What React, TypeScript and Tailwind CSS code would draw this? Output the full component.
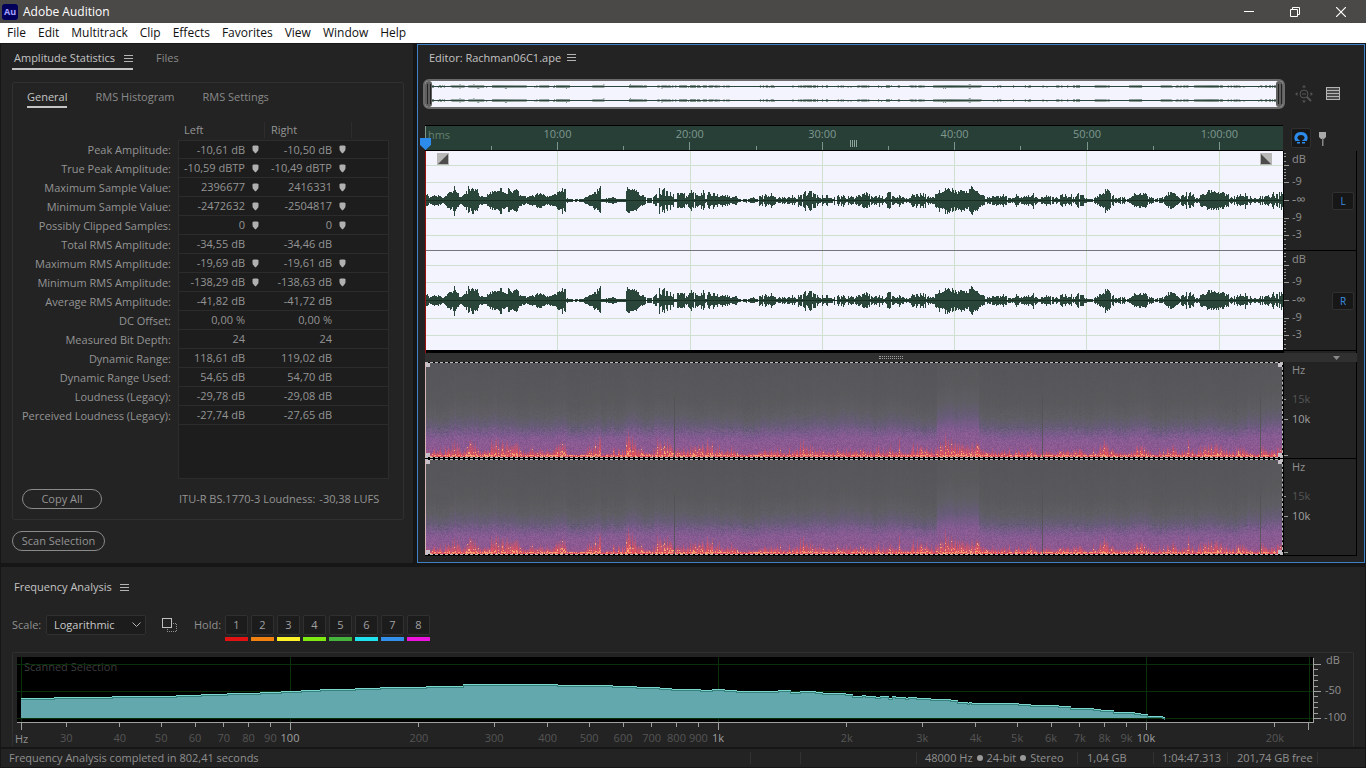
import type { ReactNode } from "react";

type Point = [number, number];

const WAVE_WIDTH = 857;
const DURATION_MIN = 64.8;

const menus = ["File", "Edit", "Multitrack", "Clip", "Effects", "Favorites", "View", "Window", "Help"];

const stats = [
  { label: "Peak Amplitude:", left: "-10,61 dB", right: "-10,50 dB", pin: true },
  { label: "True Peak Amplitude:", left: "-10,59 dBTP", right: "-10,49 dBTP", pin: true },
  { label: "Maximum Sample Value:", left: "2396677", right: "2416331", pin: true },
  { label: "Minimum Sample Value:", left: "-2472632", right: "-2504817", pin: true },
  { label: "Possibly Clipped Samples:", left: "0", right: "0", pin: true },
  { label: "Total RMS Amplitude:", left: "-34,55 dB", right: "-34,46 dB" },
  { label: "Maximum RMS Amplitude:", left: "-19,69 dB", right: "-19,61 dB", pin: true },
  { label: "Minimum RMS Amplitude:", left: "-138,29 dB", right: "-138,63 dB", pin: true },
  { label: "Average RMS Amplitude:", left: "-41,82 dB", right: "-41,72 dB" },
  { label: "DC Offset:", left: "0,00 %", right: "0,00 %" },
  { label: "Measured Bit Depth:", left: "24", right: "24" },
  { label: "Dynamic Range:", left: "118,61 dB", right: "119,02 dB" },
  { label: "Dynamic Range Used:", left: "54,65 dB", right: "54,70 dB" },
  { label: "Loudness (Legacy):", left: "-29,78 dB", right: "-29,08 dB" },
  { label: "Perceived Loudness (Legacy):", left: "-27,74 dB", right: "-27,65 dB" },
];

const holds = [
  { n: 1, color: "bg-[#e01212]" },
  { n: 2, color: "bg-[#f08010]" },
  { n: 3, color: "bg-[#fff12a]" },
  { n: 4, color: "bg-[#7fea12]" },
  { n: 5, color: "bg-[#45b33c]" },
  { n: 6, color: "bg-[#1fe2ee]" },
  { n: 7, color: "bg-[#3390ea]" },
  { n: 8, color: "bg-[#ee12de]" },
];

// peak envelope of the recording: [position, half height]
const envelope: Point[] = [
  [0, 8], [3, 3], [8, 6], [12, 6], [17, 2], [20, 5], [24, 9], [27, 10], [28, 14], [31, 11], [33, 4], [38, 6], [42, 13],
  [46, 14], [48, 9], [51, 13], [53, 4], [58, 5], [60, 4], [64, 9], [68, 12], [75, 13], [79, 9], [82, 11], [86, 9],
  [90, 12], [93, 7], [98, 4], [101, 3], [104, 7], [108, 4], [114, 10], [118, 6], [122, 4], [128, 7], [133, 10],
  [139, 14], [141, 3], [145, 1], [152, 1], [157, 2], [162, 5], [168, 9], [173, 13], [174, 13], [175, 1], [182, 2],
  [187, 3], [193, 1], [199, 1], [200, 14], [205, 12], [210, 9], [214, 6], [220, 3], [228, 3], [229, 8], [232, 13],
  [240, 10], [250, 8], [256, 9], [260, 5], [265, 9], [275, 9], [283, 12], [285, 7], [295, 6], [304, 5], [311, 4],
  [317, 1], [326, 3], [330, 1], [334, 5], [341, 7], [347, 5], [354, 4], [364, 3], [371, 6], [379, 9], [384, 9],
  [390, 5], [397, 5], [404, 4], [409, 3], [414, 6], [420, 4], [428, 4], [434, 6], [441, 7], [446, 4], [450, 4],
  [452, 4], [453, 12], [454, 4], [456, 4], [457, 11], [458, 4], [464, 9], [467, 4], [472, 4], [473, 11], [475, 3],
  [484, 2], [486, 8], [490, 6], [494, 8], [499, 7], [504, 4], [508, 3], [509, 10], [517, 11], [523, 12], [530, 10],
  [534, 10], [541, 11], [546, 14], [548, 10], [552, 10], [555, 7], [562, 3], [567, 4], [572, 4], [577, 6], [582, 3],
  [587, 2], [591, 7], [594, 3], [600, 4], [605, 4], [606, 9], [608, 4], [613, 1], [617, 5], [622, 5], [628, 2],
  [632, 5], [637, 5], [641, 5], [649, 7], [657, 5], [661, 1], [667, 3], [671, 4], [676, 7], [678, 12], [680, 9],
  [683, 9], [686, 7], [689, 3], [697, 3], [703, 2], [706, 6], [714, 9], [722, 6], [726, 2], [730, 1], [734, 4],
  [739, 4], [744, 10], [747, 9], [752, 3], [759, 6], [762, 9], [767, 6], [770, 2], [776, 6], [781, 9], [786, 9],
  [790, 10], [795, 11], [798, 7], [804, 4], [809, 4], [814, 9], [817, 8], [823, 4], [827, 2], [833, 2], [835, 8],
  [840, 6], [844, 3], [847, 10], [849, 3], [852, 10], [858, 8],
];

// stretches where the signal is dense and fills its envelope
const denseRanges: Point[] = [[0, 140], [155, 220], [508, 553], [706, 722], [740, 750], [776, 798]];

// averaged spectrum of the scan: [x, y] inside a 1296 x 65 plot
const spectrum: Point[] = [
  [4, 41], [37, 40], [95, 39], [131, 39], [159, 38], [184, 37], [210, 36], [243, 35], [264, 34], [284, 33], [303, 32],
  [338, 31], [363, 30], [409, 29], [446, 27], [540, 28], [595, 29], [619, 30], [642, 31], [654, 32], [683, 33],
  [695, 32], [707, 33], [719, 34], [761, 33], [773, 35], [783, 34], [798, 35], [805, 36], [828, 37], [835, 39],
  [845, 38], [848, 39], [858, 40], [863, 39], [871, 41], [875, 39], [878, 40], [888, 41], [891, 40], [899, 41],
  [913, 42], [933, 43], [940, 45], [950, 46], [952, 45], [954, 46], [992, 46], [1001, 47], [1013, 48], [1041, 49],
  [1053, 51], [1076, 52], [1083, 53], [1096, 55], [1117, 56], [1123, 57], [1130, 59], [1145, 60], [1147, 61],
];

const timeMarks = [10, 20, 30, 40, 50, 60];
const freqMarks = [
  30, 40, 50, 60, 70, 80, 90, 100, 200, 300, 400, 500, 600, 700, 800, 900, 1000, 2000, 3000, 4000, 5000, 6000, 7000,
  8000, 9000, 10000, 20000,
];

const timePercent = (minutes: number) => `${(minutes / DURATION_MIN) * 100}%`;
const freqPercent = (hz: number) => `${((428 * Math.log10(hz / 100) + 273) / 1296) * 100}%`;
const freqLabel = (hz: number) => (hz >= 1000 ? `${hz / 1000}k` : `${hz}`);
const isDecade = (hz: number) => Number.isInteger(Math.log10(hz));

const createRandom = (seed: number) => () => {
  seed = (seed * 1664525 + 1013904223) % 4294967296;
  return seed / 4294967296;
};

const amplitudeAt = (x: number) => {
  const next = envelope.findIndex(([px]) => px > x);
  if (next < 1) return envelope[next === 0 ? 0 : envelope.length - 1][1];
  const [x0, a0] = envelope[next - 1];
  const [x1, a1] = envelope[next];
  return a0 + ((a1 - a0) * (x - x0)) / (x1 - x0);
};

const wavePath = (center: number, scale: number) => {
  const random = createRandom(31);
  let path = "";
  let level = 1;
  for (let x = 0; x < WAVE_WIDTH; x++) {
    const amp = amplitudeAt(x);
    const dense = denseRanges.some(([from, to]) => x >= from && x < to);
    if (random() < 0.85) level = dense ? 0.62 + random() * 0.48 : random() < 0.12 ? 0.15 : 0.4 + random() * 0.8;
    const top = Math.round(amp * scale * level * (0.85 + random() * 0.2));
    const bottom = Math.round(amp * scale * level * (0.85 + random() * 0.2));
    path += `M${x + 0.5} ${center - top}V${center + bottom + 1}`;
  }
  return path;
};

const spectrumPath = spectrum.map(([x, y], i) => (i === 0 ? `M${x} ${y + 0.5}` : `H${x}V${y + 0.5}`)).join("");

const mix = (a: number[], b: number[], t: number) => a.map((v, i) => v + (b[i] - v) * Math.max(0, Math.min(1, t)));

const heat: { d: number; rgb: number[] }[] = [
  { d: 0, rgb: [164, 84, 136] },
  { d: 6, rgb: [142, 88, 144] },
  { d: 18, rgb: [136, 91, 147] },
  { d: 25, rgb: [120, 91, 138] },
  { d: 33, rgb: [102, 92, 118] },
  { d: 44, rgb: [94, 93, 99] },
  { d: 60, rgb: [89, 89, 92] },
  { d: 96, rgb: [86, 86, 90] },
];

const heatAt = (d: number) => {
  const next = heat.findIndex((h) => h.d > d);
  if (next < 1) return heat[next === 0 ? 0 : heat.length - 1].rgb;
  return mix(heat[next - 1].rgb, heat[next].rgb, (d - heat[next - 1].d) / (heat[next].d - heat[next - 1].d));
};

const drawSpectrogram = (canvas: HTMLCanvasElement | null) => {
  const ctx = canvas?.getContext("2d");
  if (!canvas || !ctx) return;
  const { width, height } = canvas;
  const image = ctx.createImageData(width, height);
  const random = createRandom(5);
  let drift = 0;
  for (let x = 0; x < width; x++) {
    const amp = amplitudeAt(x) / 14;
    drift = drift * 0.9 + (random() - 0.5) * 0.06;
    const bump = x > 510 && x < 553 ? 0.26 : 0.12 * Math.exp(-(((x - 410) / 70) ** 2)) + (x > 820 ? 0.15 : 0);
    const spread = 0.86 + bump + amp * 0.12 + drift + (random() - 0.5) * 0.08;
    const strength = random();
    const flame = 1 + amp ** 1.2 * 21 * (0.3 + strength * 0.7) + (random() > 0.93 ? 6 : 0);
    const gap = x === 248 || x === 616 || x === 834;
    for (let y = 0; y < height; y++) {
      const d = height - 1 - y;
      let rgb = heatAt(d / spread);
      if (d < flame) {
        const t = 1 - d / flame;
        rgb = mix(rgb, [238, 82, 84], 0.15 + (0.4 + strength * 0.55) * t);
        if (random() < (0.08 + amp * 0.35) * t * t) rgb = mix(rgb, [255, 190, 120], 0.75);
      }
      if (d === 1 && random() < 0.5) rgb = [250, 150, 110];
      if (gap) rgb = mix(rgb, [82, 82, 84], d < 60 ? 0.8 : 0.1);
      const noise = (random() - 0.5) * (d < 30 ? 22 : d < 46 ? 8 : 3);
      const i = (y * width + x) * 4;
      image.data[i] = rgb[0] + noise;
      image.data[i + 1] = rgb[1] + noise * 0.6;
      image.data[i + 2] = rgb[2] + noise * 0.6;
      image.data[i + 3] = 255;
    }
  }
  ctx.putImageData(image, 0, 0);
};

const PanelMenu = () => (
  <button aria-label="Panel menu" className="flex w-[9px] flex-col gap-[2px]">
    <span className="h-px bg-[#b4b4b4]" />
    <span className="h-px bg-[#b4b4b4]" />
    <span className="h-px bg-[#b4b4b4]" />
  </button>
);

const TitleBar = () => (
  <header className="flex h-[23px] items-center bg-[#4b4947] text-xs text-white">
    <span className="ml-[2px] flex size-4 items-center justify-center rounded-[3px] bg-[#00005b] text-[9px] font-bold text-[#a3a3ff]">
      Au
    </span>
    <h1 className="ml-[5px] flex-1">Adobe Audition</h1>
    <button aria-label="Minimize" className="flex h-full w-[46px] items-center justify-center">
      <svg width="10" height="10"><path d="M0 4.5H10" stroke="white" /></svg>
    </button>
    <button aria-label="Restore" className="flex h-full w-[46px] items-center justify-center">
      <svg width="10" height="10" fill="none" stroke="white"><path d="M.5 2.5h7v7h-7zM2.5 2.5v-2h7v7h-2" /></svg>
    </button>
    <button aria-label="Close" className="flex h-full w-[46px] items-center justify-center">
      <svg width="10" height="10" stroke="white" strokeWidth="1.2"><path d="M0 0L10 10M10 0L0 10" /></svg>
    </button>
    <span className="w-[2px]" />
  </header>
);

const MenuBar = () => (
  <nav className="flex h-5 items-center gap-3 bg-white pl-[7px] text-xs text-[#111]">
    {menus.map((menu) => (
      <button key={menu}>{menu}</button>
    ))}
  </nav>
);

const Pin = () => (
  <svg width="7" height="9" className="inline-block" fill="#b0b0b0">
    <path d="M1.500 .5H5.500L6.500 1.500V4C6.500 5.500 5 7 3.500 8.500C2 7 .5 5.500 .5 4V1.500Z" />
  </svg>
);

const StatCell = ({ value, pin }: { value: string; pin?: boolean }) => (
  <div className="flex items-center gap-[7px] pl-1">
    <span className="w-[62px] whitespace-nowrap text-right">{value}</span>
    {pin && <Pin />}
  </div>
);

const StatisticsPanel = () => (
  <section className="w-[412px] shrink-0 bg-[#232323] pr-[9px] pl-[11px]">
    <div className="flex h-[26px] items-end">
      <div className="flex h-[22px] items-center gap-[9px] border-b-2 border-[#c4c4c4] pl-[2px] text-[#c4c4c4]">
        <button>Amplitude Statistics</button>
        <PanelMenu />
      </div>
      <button className="mb-px ml-[23px] flex h-[22px] items-center text-[#8a8a8a]">Files</button>
    </div>
    <div className="mt-3 h-[438px] rounded-[2px] border border-[#303030] px-[9px]">
      <div className="flex h-[25px] items-end gap-[28px] pl-[5px] text-[#8a8a8a]">
        <button className="h-5 border-b-2 border-[#c4c4c4] text-[#c4c4c4]">General</button>
        <button className="h-5 pb-[2px]">RMS Histogram</button>
        <button className="h-5 pb-[2px]">RMS Settings</button>
      </div>
      <table className="mt-3 w-[367px] table-fixed border-separate border-spacing-0 text-[#949494]">
        <colgroup>
          <col className="w-[156px]" />
          <col className="w-[87px]" />
          <col className="w-[87px]" />
          <col />
        </colgroup>
        <thead>
          <tr className="h-5">
            <td />
            <th className="py-0 pr-0 pl-[6px] text-left font-normal">
              <div className="border-r border-[#2d2d2d] leading-4">Left</div>
            </th>
            <th className="py-0 pr-0 pl-[6px] text-left font-normal">
              <div className="border-r border-[#2d2d2d] leading-4">Right</div>
            </th>
            <td />
          </tr>
        </thead>
        <tbody>
          {stats.map((row, i) => (
            <tr key={row.label} className="h-[19px]">
              <th className="whitespace-nowrap p-0 pr-[7px] text-right font-normal">
                <div className="flex justify-end leading-[18px]">{row.label}</div>
              </th>
              <td className={`border-b border-l border-[#2c2c2c] bg-[#1d1d1d] p-0 ${i === 0 ? "border-t" : ""}`}>
                <StatCell value={row.left} pin={row.pin} />
              </td>
              <td className={`border-b border-[#2c2c2c] bg-[#1d1d1d] p-0 pl-px ${i === 0 ? "border-t" : ""}`}>
                <StatCell value={row.right} pin={row.pin} />
              </td>
              <td className={`border-b border-r border-[#2c2c2c] bg-[#1d1d1d] p-0 ${i === 0 ? "border-t" : ""}`} />
            </tr>
          ))}
          <tr className="h-[54px]">
            <td />
            <td colSpan={3} className="border border-t-0 border-[#2c2c2c] bg-[#1d1d1d]" />
          </tr>
        </tbody>
      </table>
      <div className="mt-[10px] flex items-center text-[#949494]">
        <button className="h-5 w-20 rounded-full border border-[#8a8a8a] leading-4">Copy All</button>
        <p className="ml-[77px] flex gap-1">
          <span>ITU-R BS.1770-3 Loudness:</span>
          <span>-30,38 LUFS</span>
        </p>
      </div>
    </div>
    <button className="mt-[11px] h-5 w-[93px] rounded-full border border-[#8a8a8a] leading-4 text-[#949494]">Scan Selection</button>
  </section>
);

const OverviewHandle = () => (
  <span className="flex w-[7px] justify-center gap-[2px] rounded-[3px] bg-[#5f5f5f] py-[3px]">
    <i className="w-px bg-[#222]" />
    <i className="w-px bg-[#222]" />
  </span>
);

const Overview = () => (
  <div className="flex items-center pl-[5px]">
    <div className="flex h-[30px] flex-1 justify-between overflow-hidden rounded-md border-2 border-[#6b6b6b] bg-[#f4f4ff]">
      <OverviewHandle />
      <svg className="h-full min-w-0 flex-1" viewBox="0 0 857 26" preserveAspectRatio="none" shapeRendering="crispEdges">
        <path d={wavePath(5, 0.12)} stroke="#7f8f89" />
        <path d={wavePath(19, 0.12)} stroke="#7f8f89" />
        <path d="M0 5.5H857M0 19.5H857" stroke="#2b463c" />
      </svg>
      <OverviewHandle />
    </div>
    <div className="flex w-[79px] items-center gap-[13px] pl-[10px]">
      <button aria-label="Zoom out full">
        <svg width="18" height="18" fill="none" stroke="#555">
          <circle cx="9" cy="9" r="4" />
          <path d="M7 9h4" />
          <path d="M12 12l4 4" strokeWidth="2" />
          <path d="M9 0l2 2.500h-4zM9 18l2-2.500h-4zM0 9l2.500-2v4zM18 9l-2.500-2v4z" fill="#555" stroke="none" />
        </svg>
      </button>
      <button aria-label="Show track list">
        <svg width="14" height="14" fill="none" stroke="#b4b4b4" shapeRendering="crispEdges">
          <rect x=".5" y=".5" width="13" height="12" fill="#4a4a4a" />
          <path d="M0 3.500H14M0 6.500H14M0 9.500H14" />
        </svg>
      </button>
    </div>
  </div>
);

const TimeRuler = () => (
  <div className="flex h-[26px]">
    <div className="relative flex-1 border-y border-black bg-[#283f37]">
      <svg className="block h-6 w-full" shapeRendering="crispEdges">
        {timeMarks.map((m) => (
          <line key={m} x1={timePercent(m)} x2={timePercent(m)} y1="16" y2="24" stroke="#7d968c" />
        ))}
        {timeMarks.map((m) => (
          <line key={m} x1={timePercent(m - 5)} x2={timePercent(m - 5)} y1="20" y2="24" stroke="#7d968c" />
        ))}
        <path d="M.5 0V24" stroke="#7d968c" />
        <svg x="50%" overflow="visible">
          <path d="M-3.500 14V21M-1.500 14V21M.500 14V21M2.500 14V21" stroke="#8fa59c" />
        </svg>
        <g fill="#7f998f" textAnchor="middle" shapeRendering="auto">
          <text x="14" y="13" fill="#64806f">hms</text>
          {timeMarks.map((m) => (
            <text key={m} x={timePercent(m)} y="12">
              {m === 60 ? "1:00:00" : `${m}:00`}
            </text>
          ))}
        </g>
      </svg>
      <svg width="11" height="12" className="absolute top-3 -left-[5px] z-10" fill="#2d8ceb">
        <path d="M0 0H11V7L5.500 12L0 7Z" />
      </svg>
    </div>
    <div className="flex w-[74px] items-center gap-[7px] pl-2">
      <button aria-label="Snapping" className="flex size-5 items-center justify-center rounded-[2px] border border-[#303030] bg-[#171717]">
        <svg width="14" height="14" fill="none" stroke="#2d8ceb">
          <path d="M4.500 12.500V10.500C0 8 1.800 2.500 7 2.500S14 8 9.500 10.500V12.500" strokeWidth="3" />
          <path d="M2 10.500H6.500M7.500 10.500H12" stroke="#171717" />
        </svg>
      </button>
      <button aria-label="Add marker">
        <svg width="9" height="15" fill="#a8a8a8">
          <path d="M1 1H8V6L6 8H3L1 6Z" />
          <path d="M4 7h1.500v8H4z" fill="#888" />
        </svg>
      </button>
    </div>
  </div>
);

const DecibelScale = ({ channel }: { channel: string }) => (
  <div className="flex h-[100px] items-center justify-between border-b border-black pr-[2px]">
    <svg className="h-[99px] w-12">
      <path
        d="M0 14.500H5M0 31.500H5M0 49.500H5M0 67.500H5M0 84.500H5M0 2.500H2M0 5.500H2M0 10.500H2M0 18.500H2M0 21.500H2M0 24.500H2M0 27.500H2M0 70.500H2M0 73.500H2M0 77.500H2M0 80.500H2M0 88.500H2M0 93.500H2M0 97.500H2"
        stroke="#9a9a9a"
        shapeRendering="crispEdges"
      />
      <g fill="#8f8f8f">
        <text x="8" y="12">dB</text>
        <text x="8" y="34">-9</text>
        <text x="8" y="53" className="text-[13px]">-∞</text>
        <text x="8" y="70">-9</text>
        <text x="8" y="87">-3</text>
      </g>
    </svg>
    <button className="flex h-[18px] w-[22px] items-center justify-center rounded-[2px] border border-[#303030] bg-[#171717] text-[10px] text-[#3a8ee6]">
      {channel}
    </button>
  </div>
);

const FadeIcon = ({ flip }: { flip?: boolean }) => (
  <svg width="12" height="12">
    <rect width="12" height="12" fill="#b8b8b8" />
    <path d={flip ? "M1 1V11H11Z" : "M11 1V11H1Z"} fill="#4c4c4c" />
  </svg>
);

const WaveformView = () => (
  <div className="flex h-[202px]">
    <div className="relative flex-1 border-l border-[#9c1010] bg-black pb-[3px]">
      <svg
        className="block h-full w-full bg-[#f4f4ff]"
        viewBox="0 0 857 199"
        preserveAspectRatio="none"
        shapeRendering="crispEdges"
      >
        <path
          d="M0 14.500H857M0 31.500H857M0 67.500H857M0 84.500H857M0 114.500H857M0 131.500H857M0 167.500H857M0 184.500H857"
          stroke="#d0e0d0"
        />
        {timeMarks.map((m) => {
          const x = Math.round((m / DURATION_MIN) * WAVE_WIDTH) - 0.5;
          return <path key={m} d={`M${x} 0V199`} stroke="#d0e0d0" />;
        })}
        <path d="M0 99.500H857" stroke="#75757e" />
        <path d={wavePath(49, 1)} stroke="#2a463b" />
        <path d={wavePath(149, 1)} stroke="#2a463b" />
        <path d="M0 49.500H857M0 149.500H857" stroke="#182c22" />
      </svg>
      <div className="absolute inset-x-[11px] top-[2px] flex justify-between">
        <FadeIcon />
        <FadeIcon flip />
      </div>
    </div>
    <div className="flex w-[74px] flex-col border-x border-black">
      <DecibelScale channel="L" />
      <DecibelScale channel="R" />
    </div>
  </div>
);

const Splitter = () => (
  <div className="flex h-[9px] items-center bg-[#303030]">
    <div className="flex flex-1 flex-col items-center gap-px pl-6">
      <span className="h-px w-6 border-t border-dotted border-[#a0a0a0]" />
      <span className="h-px w-6 border-t border-dotted border-[#a0a0a0]" />
    </div>
    <button aria-label="Hide spectral display" className="pr-[17px]">
      <svg width="7" height="4" className="block" fill="#8a8a8a"><path d="M0 0H7L3.500 4Z" /></svg>
    </button>
  </div>
);

const Corner = ({ className }: { className: string }) => (
  <span className={`absolute size-1 bg-[#c8c0c8] ${className}`} />
);

const SpectralChannel = () => (
  <div className="flex h-[97px] border-b border-black">
    <div className="relative flex-1 border border-l border-dashed border-[#bcbcbc] bg-black [border-left-color:#d6b4b4] [border-left-style:solid]">
      <canvas ref={drawSpectrogram} width={WAVE_WIDTH - 1} height={94} className="block h-full w-full" />
      <Corner className="top-0 left-0" />
      <Corner className="top-0 right-0" />
      <Corner className="bottom-0 left-0" />
      <Corner className="right-0 bottom-0" />
    </div>
    <svg className="h-full w-[74px] border-x border-black">
      <path d="M0 37.500H2M0 57.500H4M0 93.500H4" stroke="#9a9a9a" shapeRendering="crispEdges" />
      <g fill="#8f8f8f">
        <text x="8" y="12">Hz</text>
        <text x="8" y="41" fill="#555">15k</text>
        <text x="8" y="61" fill="#a0a0a0">10k</text>
      </g>
    </svg>
  </div>
);

const EditorPanel = () => (
  <section className="min-w-0 flex-1 border border-[#3f80c6] bg-[#232323] pb-[6px]">
    <div className="flex h-[25px] items-center gap-[6px] pl-[11px] text-[#c4c4c4]">
      <h2>Editor: Rachman06C1.ape</h2>
      <PanelMenu />
    </div>
    <div className="mt-[9px]">
      <Overview />
    </div>
    <div className="mt-4 px-[7px]">
      <TimeRuler />
      <WaveformView />
      <Splitter />
      <SpectralChannel />
      <SpectralChannel />
    </div>
  </section>
);

const SpectrumPlot = () => (
  <div className="relative h-[65px] bg-black">
    <p className="absolute top-[2px] left-[7px] text-[#3c3c3c]">Scanned Selection</p>
    <svg
      className="relative block h-full w-full"
      viewBox="0 0 1296 65"
      preserveAspectRatio="none"
      shapeRendering="crispEdges"
    >
      <path d="M0 7.500H1296M0 34.500H1296M0 61.500H1296M4.500 0V65M273.500 0V65M701.500 0V65M1129.500 0V65M1292.500 0V65" stroke="#0a2f0a" />
      <path d={`${spectrumPath}V61H4Z`} fill="#63a8ac" />
      <path d={spectrumPath} fill="none" stroke="#7ad6cf" />
      <path d={spectrumPath} fill="none" stroke="#37827c" transform="translate(0 1)" />
    </svg>
  </div>
);

const AxisText = ({ children, hz }: { children: ReactNode; hz: number }) => (
  <text x={freqPercent(hz)} y="20" textAnchor="middle" fill={isDecade(hz) ? "#a0a0a0" : "#555"}>
    {children}
  </text>
);

const FrequencyPanel = () => (
  <section className="bg-[#232323] px-[11px] pb-px">
    <div className="flex h-10 items-center gap-2 pl-[2px] text-[#c4c4c4]">
      <h2>Frequency Analysis</h2>
      <PanelMenu />
    </div>
    <div className="mt-2 flex items-start text-[#8f8f8f]">
      <label htmlFor="scale" className="w-[34px] leading-5">Scale:</label>
      <div className="relative">
        <select
          id="scale"
          defaultValue="Logarithmic"
          className="block h-5 w-[100px] appearance-none rounded-[2px] border border-[#303030] bg-[#1c1c1c] pl-[7px] text-[#c8c8c8]"
        >
          <option>Logarithmic</option>
          <option>Linear</option>
        </select>
        <svg width="9" height="6" className="pointer-events-none absolute top-[7px] right-[5px]" fill="none" stroke="#b4b4b4">
          <path d="M.5 .5L4.500 4.500L8.500 .5" />
        </svg>
      </div>
      <button aria-label="Copy graph" className="mt-[3px] ml-4">
        <svg width="15" height="15" fill="none" shapeRendering="crispEdges">
          <rect x=".5" y=".5" width="9" height="9" stroke="#c0c0c0" />
          <path d="M11 5.500H14M14.500 6V14M5.500 11V14M5 13.500H14" stroke="#909090" strokeDasharray="1 1" />
        </svg>
      </button>
      <span className="ml-[17px] w-[31px] leading-5">Hold:</span>
      <div className="flex gap-[3px]">
        {holds.map((hold) => (
          <div key={hold.n} className="flex w-[23px] flex-col gap-[2px]">
            <button className="h-5 rounded-[2px] border border-[#303030] bg-[#1c1c1c] leading-4 text-[#a0a0a0]">{hold.n}</button>
            <span className={`h-1 ${hold.color}`} />
          </div>
        ))}
      </div>
    </div>
    <div className="mt-[11px] flex rounded-t-[2px] border border-b-0 border-[#303030] pt-1 pl-1">
      <div className="min-w-0 flex-1">
        <SpectrumPlot />
        <svg className="block h-6 w-full overflow-visible">
          <g stroke="#a0a0a0" shapeRendering="crispEdges">
            <line x1="0" x2="100%" y1=".5" y2=".5" />
            <line x1="4.500" x2="4.500" y1="0" y2="8" />
            {freqMarks.map((hz) => (
              <line key={hz} x1={freqPercent(hz)} x2={freqPercent(hz)} y1="0" y2={isDecade(hz) ? 8 : 5} />
            ))}
            <line x1={freqPercent(24000)} x2={freqPercent(24000)} y1="0" y2="8" />
          </g>
          <text x="-2" y="21" fill="#8f8f8f">Hz</text>
          {freqMarks.map((hz) => (
            <AxisText key={hz} hz={hz}>{freqLabel(hz)}</AxisText>
          ))}
        </svg>
      </div>
      <svg className="h-[84px] w-10 overflow-visible">
        <path
          d="M.5 1V66M0 7.500H8M0 34.500H8M0 61.500H8M0 12.500H5M0 18.500H5M0 23.500H5M0 29.500H5M0 39.500H5M0 45.500H5M0 50.500H5M0 56.500H5"
          stroke="#a0a0a0"
          shapeRendering="crispEdges"
        />
        <g fill="#8f8f8f">
          <text x="13" y="7">dB</text>
          <text x="12" y="37">-50</text>
          <text x="11" y="64">-100</text>
        </g>
      </svg>
    </div>
  </section>
);

const StatusBar = () => (
  <footer className="mt-[2px] flex h-[18px] items-center bg-[#232323] text-[#8f8f8f]">
    <p className="flex-1 pl-2">Frequency Analysis completed in 802,41 seconds</p>
    <span className="h-3 w-[50px] border-l border-[#323232]" />
    <span className="h-3 w-[116px] border-l border-[#323232]" />
    <p className="flex h-3 w-[161px] items-center gap-1 border-l border-[#323232] pl-2 whitespace-nowrap">
      <span>48000 Hz</span>
      <i className="size-[6px] rounded-full bg-[#9a9a9a]" />
      <span>24-bit</span>
      <i className="size-[6px] rounded-full bg-[#9a9a9a]" />
      <span>Stereo</span>
    </p>
    <p className="flex h-3 w-[76px] items-center border-l border-[#323232] pl-[9px]">1,04 GB</p>
    <p className="flex h-3 w-[74px] items-center border-l border-[#323232] pl-2">1:04:47.313</p>
    <p className="flex h-3 w-[90px] items-center border-l border-[#323232] pl-[9px] whitespace-nowrap">201,74 GB free</p>
    <span className="h-3 w-12 border-l border-[#323232]" />
  </footer>
);

export default function App() {
  return (
    <div className="min-h-screen bg-[#161616] font-['Open_Sans','Noto_Sans',sans-serif] text-[11px] leading-4">
      <TitleBar />
      <MenuBar />
      <main className="px-px">
        <div className="flex gap-1 pt-px">
          <StatisticsPanel />
          <EditorPanel />
        </div>
        <div className="mt-1">
          <FrequencyPanel />
          <StatusBar />
        </div>
      </main>
    </div>
  );
}
